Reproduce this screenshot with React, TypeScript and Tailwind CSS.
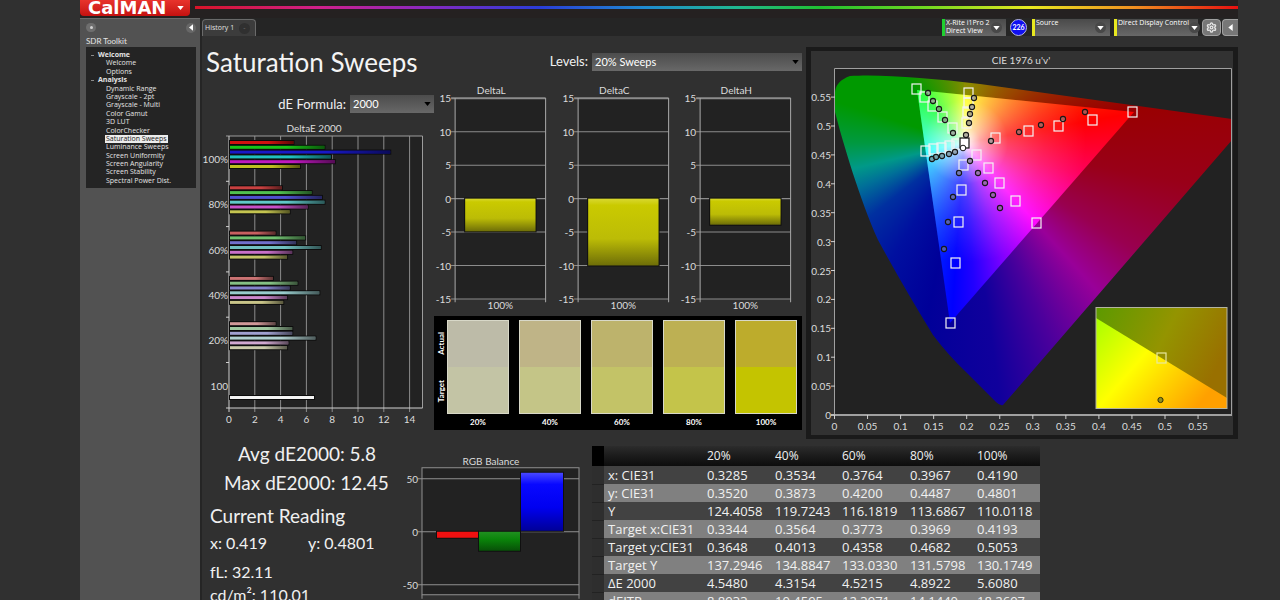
import { Settings } from "lucide-react";

type Point = [number, number];

const NAV = [
  { title: "Welcome", items: ["Welcome", "Options"] },
  {
    title: "Analysis",
    items: [
      "Dynamic Range",
      "Grayscale - 2pt",
      "Grayscale - Multi",
      "Color Gamut",
      "3D LUT",
      "ColorChecker",
      "Saturation Sweeps",
      "Luminance Sweeps",
      "Screen Uniformity",
      "Screen Angularity",
      "Screen Stability",
      "Spectral Power Dist.",
    ],
  },
];

const DELTA_E = [
  {
    label: "100%",
    values: [5.0, 7.4, 12.5, 7.9, 8.2, 5.5],
    colors: ["#d01010", "#18c418", "#1818c8", "#20c0c0", "#c018c0", "#c0c020"],
  },
  {
    label: "80%",
    values: [4.1, 6.4, 7.2, 7.4, 6.1, 4.7],
    colors: ["#c84040", "#50c050", "#5050d0", "#60c8c8", "#c850c8", "#c4c450"],
  },
  {
    label: "60%",
    values: [3.6, 5.9, 5.2, 7.1, 4.9, 4.5],
    colors: ["#c86060", "#70c070", "#7070cc", "#70c0c0", "#c870c8", "#c4c468"],
  },
  {
    label: "40%",
    values: [3.4, 5.3, 4.7, 7.0, 4.5, 4.2],
    colors: ["#cc7474", "#84c084", "#8484cc", "#98cccc", "#cc88cc", "#c8c488"],
  },
  {
    label: "20%",
    values: [3.6, 4.9, 4.9, 6.7, 4.6, 4.5],
    colors: ["#d09898", "#a0c8a0", "#a0a0d0", "#b0d0d0", "#d0a8d0", "#ccccac"],
  },
];

const SWATCHES = [
  { label: "20%", actual: "bg-[#bdbba8]", target: "bg-[#c3c4a5]" },
  { label: "40%", actual: "bg-[#bfb487]", target: "bg-[#c4c587]" },
  { label: "60%", actual: "bg-[#bdb36c]", target: "bg-[#c3c367]" },
  { label: "80%", actual: "bg-[#bdb053]", target: "bg-[#c4c44a]" },
  { label: "100%", actual: "bg-[#bdac2c]", target: "bg-[#c4c400]" },
];

const COLUMNS = ["20%", "40%", "60%", "80%", "100%"];

const ROWS = [
  ["x: CIE31", "0.3285", "0.3534", "0.3764", "0.3967", "0.4190"],
  ["y: CIE31", "0.3520", "0.3873", "0.4200", "0.4487", "0.4801"],
  ["Y", "124.4058", "119.7243", "116.1819", "113.6867", "110.0118"],
  ["Target x:CIE31", "0.3344", "0.3564", "0.3773", "0.3969", "0.4193"],
  ["Target y:CIE31", "0.3648", "0.4013", "0.4358", "0.4682", "0.5053"],
  ["Target Y", "137.2946", "134.8847", "133.0330", "131.5798", "130.1749"],
  ["ΔE 2000", "4.5480", "4.3154", "4.5215", "4.8922", "5.6080"],
  ["dEITP", "8.8933", "10.4595", "12.3971", "14.1440", "18.2697"],
];

const TARGETS: Point[] = [
  [916, 89], [924, 97], [932, 106], [942, 117], [952, 128],
  [968, 93], [968, 103], [967, 112], [966, 123],
  [995, 138], [1028, 131], [1058, 126], [1092, 120], [1132, 112],
  [925, 151], [933, 149], [941, 148], [949, 146], [956, 144],
  [976, 155], [988, 168], [999, 183], [1015, 201], [1036, 223],
  [963, 165], [961, 190], [958, 222], [955, 263], [950, 323],
];

const READINGS: Point[] = [
  [928, 93], [933, 101], [939, 109], [945, 120], [953, 133],
  [974, 98], [972, 107], [970, 114], [969, 123], [966, 135],
  [991, 141], [1019, 132], [1041, 125], [1063, 119], [1085, 112],
  [932, 159], [936, 157], [942, 156], [949, 154], [955, 152],
  [970, 161], [978, 173], [985, 183], [993, 195], [1000, 208],
  [959, 173], [953, 197], [948, 222], [944, 249],
];

function Caret({ className = "fill-white" }: { className?: string }) {
  return (
    <svg viewBox="0 0 8 5" className={`h-[4px] w-[7px] shrink-0 ${className}`}>
      <path d="M0 0h8L4 5z" />
    </svg>
  );
}

function Header() {
  return (
    <header className="flex h-[18px] bg-[#252121]">
      <button className="flex h-4 w-[110px] items-center justify-between rounded-b-sm bg-linear-to-b from-[#e8332c] to-[#c5100f] pr-[6px] pl-2 text-white">
        <span className="font-['DejaVu_Sans',sans-serif] text-[18px] leading-4 font-bold">
          CalMAN
        </span>
        <Caret />
      </button>
      <div className="mt-[6px] ml-[5px] h-[3px] flex-1 bg-[linear-gradient(90deg,#d81428,#d0208c_12%,#8a28c0_22%,#2a3cd8_33%,#1f8ad0_43%,#20b890_52%,#20c030_60%,#70d820_70%,#e8e820_80%,#f09020_90%,#e81010)]" />
    </header>
  );
}

function Sidebar() {
  return (
    <aside className="w-[120px] shrink-0 border-t border-[#6a6a6a] bg-[#525252] pr-1 pl-[6px]">
      <div className="flex h-[17px] items-center justify-between">
        <button
          aria-label="Options"
          className="flex h-[9px] w-[10px] items-center justify-center rounded-full bg-[#6e6e6e]"
        >
          <span className="h-[3px] w-[3px] rounded-full bg-[#d0d0d0]" />
        </button>
        <button
          aria-label="Collapse"
          className="flex h-[10px] w-[10px] items-center justify-center rounded-full bg-[#676767]"
        >
          <svg viewBox="0 0 5 8" className="h-[7px] w-[4px] fill-white">
            <path d="M5 0v8L0 4z" />
          </svg>
        </button>
      </div>
      <h2 className="h-[11px] text-[8px] leading-[11px] text-[#e4e4e4]">SDR Toolkit</h2>
      <nav className="flex h-[141px] flex-col justify-between bg-[#242424] pt-1 pb-[3px] font-['Open_Sans',sans-serif] text-[7px] leading-[8px] text-[#e4e4e4]">
        {NAV.map((group) => [
          <h3 key={group.title} className="flex items-center gap-1 pl-[5px] font-bold">
            <span className="h-px w-[3px] bg-[#8a8a8a]" />
            {group.title}
          </h3>,
          ...group.items.map((item) => (
            <a
              key={`${group.title}/${item}`}
              href="#"
              className={
                item === "Saturation Sweeps"
                  ? "ml-[19px] w-fit bg-[#ececec] px-px text-[#202020]"
                  : "ml-[19px] w-fit px-px"
              }
            >
              {item}
            </a>
          )),
        ])}
      </nav>
    </aside>
  );
}

function DeviceButton({
  stripe,
  width,
  lines,
}: {
  stripe: string;
  width: string;
  lines: string[];
}) {
  return (
    <button
      className={`flex h-[17px] ${width} items-center border-l-3 ${stripe} bg-linear-to-b from-[#4a4a4a] to-[#686868] pr-1 pl-px text-left font-['Open_Sans',sans-serif] text-[7px] leading-[8px] text-white`}
    >
      <span className="flex-1 self-start whitespace-nowrap">
        {lines.map((line) => (
          <span key={line} className="block">
            {line}
          </span>
        ))}
      </span>
      <span className="flex h-[11px] w-[11px] shrink-0 items-center justify-center rounded-full bg-[#484848]">
        <Caret />
      </span>
    </button>
  );
}

function Toolbar() {
  return (
    <div className="flex h-[18px] justify-between bg-[#252525]">
      <button className="mt-px flex w-[54px] items-center justify-between rounded-t-sm border border-b-0 border-[#6a6a6a] bg-[#3c3c3c] pr-[5px] pl-[2px] font-['Open_Sans',sans-serif] text-[7px] text-[#e0e0e0]">
        History 1
        <span className="h-[11px] w-[11px] rounded-full bg-[#303030] text-[7px] leading-[9px] text-[#707070]">
          -
        </span>
      </button>
      <div className="flex items-start gap-1 pt-px">
        <DeviceButton stripe="border-[#20d030]" width="w-16" lines={["X-Rite i1Pro 2", "Direct View"]} />
        <span className="mr-px flex h-[17px] w-[17px] items-center justify-center rounded-full border border-[#b8b8e0] bg-[#1010f0] text-[7px] font-bold text-white">
          226
        </span>
        <DeviceButton stripe="border-[#e8e820]" width="w-[78px]" lines={["Source"]} />
        <DeviceButton stripe="border-[#e8e820]" width="w-[84px]" lines={["Direct Display Control"]} />
        <div className="flex gap-px">
          <button
            aria-label="Settings"
            className="flex h-[17px] w-[19px] items-center justify-center rounded-sm border border-[#a0a0a0] bg-[#777777]"
          >
            <Settings className="h-[11px] w-[11px] text-[#e4e4e4]" strokeWidth={3} />
          </button>
          <button
            aria-label="Back"
            className="flex h-[17px] w-[16px] items-center justify-center rounded-l-sm border border-r-0 border-[#a0a0a0] bg-[#777777]"
          >
            <svg viewBox="0 0 5 8" className="h-[7px] w-[5px] fill-white">
              <path d="M5 0v8L0 4z" />
            </svg>
          </button>
        </div>
      </div>
    </div>
  );
}

function Dropdown({ id, value, width }: { id: string; value: string; width: string }) {
  return (
    <div className={`relative ${width}`}>
      <select
        id={id}
        className="block h-[18px] w-full appearance-none bg-linear-to-b from-[#4c4c4c] to-[#686868] pl-[3px] text-[11px] leading-[18px] text-white"
      >
        <option>{value}</option>
      </select>
      <span className="pointer-events-none absolute top-[7px] right-[3px]">
        <Caret className="block fill-black" />
      </span>
    </div>
  );
}

function DeltaEChart() {
  const x = (v: number) => 27 + v * 12.9;
  const band = 45.3;
  return (
    <svg viewBox="0 0 232 312" className="block w-full overflow-visible text-[10px]" fill="#dcdcdc">
      <defs>
        <linearGradient id="barFade" x1="0" x2="1">
          <stop offset="0.6" stopColor="#000" stopOpacity="0" />
          <stop offset="1" stopColor="#000" stopOpacity="0.55" />
        </linearGradient>
      </defs>
      <text x="112" y="14" textAnchor="middle">DeltaE 2000</text>
      <rect x="27" y="18" width="193.5" height="272" fill="#222222" />
      {[2, 4, 6, 8, 10, 12, 14].map((v) => (
        <path key={v} d={`M${x(v)} 18v276`} stroke="#8c8c8c" />
      ))}
      <path d="M24 18h196.5v272" fill="none" stroke="#9c9c9c" />
      <path d="M27 18v276M24 290h196.5" fill="none" stroke="#d0d0d0" />
      {[1, 2, 3, 4, 5].map((i) => (
        <path key={i} d={`M24 ${18 + i * band}h3`} stroke="#d0d0d0" />
      ))}
      {DELTA_E.map((group, g) => (
        <g key={group.label}>
          {group.values.map((v, i) => {
            const y = 18 + g * band + 5 + i * 4.8;
            return (
              <g key={i}>
                <rect x="27" y={y - 1} width={v * 12.9 + 1} height="5" fill="#0c0c0c" />
                <rect x="28" y={y} width={v * 12.9 - 1} height="3" fill={group.colors[i]} />
                <rect x="28" y={y} width={v * 12.9 - 1} height="3" fill="url(#barFade)" />
              </g>
            );
          })}
          <text x="26" y={18 + g * band + 27} textAnchor="end">{group.label}</text>
        </g>
      ))}
      <rect x="27" y="277" width="86" height="5" fill="#0c0c0c" />
      <rect x="28" y="278" width="84" height="3" fill="#f4f4f4" />
      <text x="26" y="272" textAnchor="end">100</text>
      {[0, 2, 4, 6, 8, 10, 12, 14].map((v) => (
        <text key={v} x={x(v)} y="305" textAnchor="middle">{v}</text>
      ))}
    </svg>
  );
}

function DeltaChart({ title, value }: { title: string; value: number }) {
  const y = (v: number) => 114 - v * 6.65;
  return (
    <svg viewBox="0 0 122 228" className="block min-w-0 flex-1 text-[10px]" fill="#dcdcdc">
      <defs>
        <linearGradient id="yellowBar" x1="0" x2="0" y1="0" y2="1">
          <stop offset="0" stopColor="#d8d830" />
          <stop offset="0.1" stopColor="#caca00" />
          <stop offset="0.6" stopColor="#bcbc06" />
          <stop offset="1" stopColor="#6e6e08" />
        </linearGradient>
      </defs>
      <text x="57" y="10" textAnchor="middle">{title}</text>
      <rect x="21" y="14" width="90" height="200" fill="#222222" />
      {[15, 10, 5, 0, -5, -10, -15].map((v) => (
        <g key={v}>
          <path d={`M17 ${y(v)}h94`} stroke="#8c8c8c" strokeWidth={v === 15 ? 2 : 1} />
          <text x="17" y={y(v) + 4} textAnchor="end">{v}</text>
        </g>
      ))}
      <path d="M21 14v203M111 14v203" stroke="#a8a8a8" />
      <rect x="30" y={y(0) - 1} width="72" height={-value * 6.65 + 2} fill="#101010" />
      <rect x="31" y={y(0)} width="70" height={-value * 6.65} fill="url(#yellowBar)" />
      <text x="66" y="224" textAnchor="middle">100%</text>
    </svg>
  );
}

function Swatches() {
  return (
    <div className="mr-1 flex h-[114px] bg-black pt-1 font-bold text-white">
      <div className="flex h-[94px] w-[13px] flex-col-reverse items-center justify-around text-[8px] leading-[10px]">
        <span className="rotate-180 [writing-mode:vertical-rl]">Target</span>
        <span className="rotate-180 [writing-mode:vertical-rl]">Actual</span>
      </div>
      <div className="flex flex-1 gap-[10px] pr-[5px]">
        {SWATCHES.map((swatch) => (
          <div key={swatch.label} className="flex-1 text-center">
            <div className="flex h-[94px] flex-col border border-[#d8d8c8]">
              <div className={`flex-1 ${swatch.actual}`} />
              <div className={`flex-1 ${swatch.target}`} />
            </div>
            <p className="text-[8px] leading-4">{swatch.label}</p>
          </div>
        ))}
      </div>
    </div>
  );
}

// Coordinates share one screen-space origin so the locus, the gamut triangle
// and the measured points line up.
function CieChart() {
  const ux = (v: number) => 834.5 + v * 661;
  const vy = (v: number) => 415 - v * 578;
  const locus =
    "M1003 405Q1000 406 996 402L967 373Q948 355 933 335C914 304 896 273 878 240C860 200 843 143 835 112V92Q836 81 850 76C880 74 930 78 980 84L1232 119V140Z";
  return (
    <svg viewBox="806 47 432 392" className="block w-full bg-[#1a1a1a] text-[10px]" fill="#dcdcdc">
      <defs>
        <clipPath id="locus">
          <path d={locus} />
        </clipPath>
        <clipPath id="gamut">
          <path d="M917 90L1134 112L950 323Z" />
        </clipPath>
        <radialGradient id="white" gradientUnits="userSpaceOnUse" cx="966" cy="142" r="120">
          <stop offset="0" stopColor="#fff" />
          <stop offset="0.12" stopColor="#fff" stopOpacity="0.65" />
          <stop offset="0.35" stopColor="#fff" stopOpacity="0.26" />
          <stop offset="0.65" stopColor="#fff" stopOpacity="0.12" />
          <stop offset="1" stopColor="#fff" stopOpacity="0" />
        </radialGradient>
        <linearGradient id="insetDim" x1="0" x2="1" y1="0" y2="0.4">
          <stop offset="0" stopColor="#5c9a00" />
          <stop offset="0.55" stopColor="#949400" />
          <stop offset="1" stopColor="#997000" />
        </linearGradient>
        <linearGradient id="insetLit" x1="0" x2="1" y1="0" y2="0.6">
          <stop offset="0" stopColor="#a8ff00" />
          <stop offset="0.45" stopColor="#ffff00" />
          <stop offset="1" stopColor="#ffa000" />
        </linearGradient>
      </defs>
      <rect x="811" y="51" width="422" height="384" fill="#323232" />
      <text x="1021" y="64" textAnchor="middle">CIE 1976 u'v'</text>
      <rect x="834" y="68" width="398" height="347" fill="#222222" />
      <g clipPath="url(#locus)">
        <foreignObject x="834" y="68" width="398" height="347">
          <div className="h-full w-full bg-[conic-gradient(at_130px_75px,#8c8c00_4deg,#994400_45deg,#990000_78deg,#990018_100deg,#990050_122deg,#990099_138deg,#4c009c_156deg,#10009c_172deg,#000099_192deg,#0010a0_212deg,#0030a0_232deg,#007098_247deg,#009988_257deg,#009940_270deg,#009900_288deg,#009900_318deg,#509000_345deg,#8c8c00_364deg)]" />
        </foreignObject>
      </g>
      <g clipPath="url(#gamut)">
        <foreignObject x="834" y="68" width="398" height="347">
          <div className="h-full w-full bg-[conic-gradient(at_130px_75px,#ffff00_4deg,#ff8800_40deg,#ff2000_70deg,#ff0000_80deg,#ff0060_105deg,#ff00ff_138deg,#8800ff_160deg,#2200ff_176deg,#0000ff_184deg,#0070ff_215deg,#00ffff_258deg,#00ff90_290deg,#00ff20_318deg,#90ff00_345deg,#ffff00_364deg)]" />
        </foreignObject>
        <rect x="834" y="68" width="398" height="347" fill="url(#white)" />
      </g>
      <path d="M834.5 418V68.5H1231.5V415" fill="none" stroke="#a0a0a0" />
      <path d="M831 415h401" stroke="#a0a0a0" strokeWidth="2" />
      {[0, 0.05, 0.1, 0.15, 0.2, 0.25, 0.3, 0.35, 0.4, 0.45, 0.5, 0.55].map((v) => (
        <g key={v}>
          <path d={`M${ux(v)} 415v4M831 ${vy(v)}h4`} stroke="#d0d0d0" />
          <text x={ux(v)} y="430" textAnchor="middle">{v}</text>
          <text x="831" y={vy(v) + 4} textAnchor="end">{v}</text>
        </g>
      ))}
      {TARGETS.map(([x, y]) => (
        <rect key={`${x}-${y}`} x={x - 4} y={y - 5} width="9" height="10" fill="none" stroke="#f4f4f4" strokeWidth="1.2" />
      ))}
      <rect x="960" y="138" width="9" height="10" fill="#fff" stroke="#111" strokeWidth="1.2" />
      {READINGS.map(([x, y]) => (
        <circle key={`${x}-${y}`} cx={x} cy={y} r="2.6" fill="#808080" fillOpacity="0.6" stroke="#181818" strokeWidth="1.1" />
      ))}
      <circle cx="963" cy="148" r="2.8" fill="#fff" stroke="#181818" />
      <rect x="1096" y="307.5" width="131" height="101" fill="url(#insetDim)" />
      <path d="M1096 318L1227 398V408.500H1096Z" fill="url(#insetLit)" />
      <rect x="1096" y="307.5" width="131" height="101" fill="none" stroke="#b4b4a0" />
      <rect x="1157" y="353" width="9" height="10" fill="none" stroke="#e8e8a0" strokeWidth="1.2" />
      <circle cx="1160.500" cy="400" r="2.6" fill="#909020" stroke="#303008" />
    </svg>
  );
}

function Summary() {
  return (
    <section className="w-[200px] shrink-0 pl-2 text-[16px] whitespace-nowrap text-[#f0f0f0]">
      <p className="pl-7 text-[19px] leading-[29px]">Avg dE2000: 5.8</p>
      <p className="pl-[14px] text-[19px] leading-[29px]">Max dE2000: 12.45</p>
      <h2 className="pt-1 text-[19px] leading-[30px]">Current Reading</h2>
      <div className="flex pt-px leading-[22px]">
        <p className="w-[98px]">x: 0.419</p>
        <p>y: 0.4801</p>
      </div>
      <p className="pt-[5px] leading-[25px]">fL: 32.11</p>
      <p className="leading-[22px]">cd/m²: 110.01</p>
    </section>
  );
}

function RgbBalance() {
  return (
    <svg viewBox="0 0 184 160" className="block w-[184px] shrink-0 text-[10px]" fill="#dcdcdc">
      <defs>
        <linearGradient id="blueBar" x1="0" x2="0" y1="0" y2="1">
          <stop offset="0" stopColor="#4848ff" />
          <stop offset="0.2" stopColor="#0808ff" />
          <stop offset="0.6" stopColor="#0000f0" />
          <stop offset="1" stopColor="#000098" />
        </linearGradient>
        <linearGradient id="greenBar" x1="0" x2="0" y1="0" y2="1">
          <stop offset="0" stopColor="#209020" />
          <stop offset="0.4" stopColor="#0a840a" />
          <stop offset="1" stopColor="#085008" />
        </linearGradient>
      </defs>
      <text x="89" y="20" textAnchor="middle">RGB Balance</text>
      <rect x="20" y="23" width="157" height="127" fill="#222222" stroke="#909090" />
      {[50, 0, -50].map((v) => (
        <g key={v}>
          <path d={`M16 ${87 - v * 1.06}h161`} stroke="#909090" />
          <text x="16" y={91 - v * 1.06} textAnchor="end">{v}</text>
        </g>
      ))}
      <path d="M20 150v4M177 150v4" stroke="#909090" />
      <rect x="34" y="86" width="43" height="8" fill="#101010" />
      <rect x="35" y="87" width="41" height="6" fill="#f01010" />
      <rect x="76" y="86" width="43" height="21" fill="#101010" />
      <rect x="77" y="87" width="41" height="19" fill="url(#greenBar)" />
      <rect x="118" y="27" width="44" height="60" fill="#101010" />
      <rect x="119" y="28" width="42" height="58" fill="url(#blueBar)" />
      <text x="97" y="162" textAnchor="middle">100%</text>
    </svg>
  );
}

function ResultsTable() {
  return (
    <table className="mt-[7px] ml-[6px] h-fit w-[448px] shrink-0 table-fixed border-collapse text-left font-['Open_Sans',sans-serif] text-[13px] whitespace-nowrap text-[#f0f0f0]">
      <colgroup>
        <col className="w-3" />
        <col className="w-[103px]" />
        <col className="w-[68px]" />
        <col className="w-[67px]" />
        <col className="w-[68px]" />
        <col className="w-[67px]" />
        <col />
      </colgroup>
      <thead>
        <tr className="h-5 bg-linear-to-b from-[#2c2c2c] to-[#0c0c0c] leading-[18px]">
          <td className="bg-black p-0" />
          <td className="p-0" />
          {COLUMNS.map((column) => (
            <th key={column} scope="col" className="p-0 text-[12px] font-normal">{column}</th>
          ))}
        </tr>
      </thead>
      <tbody>
        {ROWS.map(([name, ...values], i) => (
          <tr key={name} className={i % 2 ? "h-[18px] bg-[#808080] leading-[18px]" : "h-[18px] bg-[#424242] leading-[18px]"}>
            <td className="border-b border-[#222222] bg-[#2e2e2e] p-0" />
            <th scope="row" className="p-0 pl-1 font-normal">{name}</th>
            {values.map((value, c) => (
              <td key={c} className="p-0">{value}</td>
            ))}
          </tr>
        ))}
      </tbody>
    </table>
  );
}

export default function App() {
  return (
    <div className="h-screen overflow-hidden bg-[#303030] pr-[42px] pl-20 font-['Lato','Open_Sans',sans-serif]">
      <Header />
      <div className="flex h-full">
        <Sidebar />
        <main className="min-w-0 flex-1 border-l-2 border-[#252525] bg-[#303030]">
          <Toolbar />
          <div className="flex pt-[11px]">
            <div className="min-w-0 flex-[604]">
              <div className="flex justify-between pr-1 pl-1">
                <h1 className="text-[26px] leading-[30px] whitespace-nowrap text-[#f4f4f4]">
                  Saturation Sweeps
                </h1>
                <div className="flex items-center gap-1">
                  <label htmlFor="levels" className="text-[13px] text-[#f0f0f0]">
                    Levels:
                  </label>
                  <Dropdown id="levels" value="20% Sweeps" width="w-[210px]" />
                </div>
              </div>
              <div className="flex pt-1">
                <div className="min-w-0 flex-[232]">
                  <div className="flex items-center justify-end gap-1 pt-[14px] pb-[5px]">
                    <label htmlFor="formula" className="text-[13px] leading-[18px] text-[#f0f0f0]">
                      dE Formula:
                    </label>
                    <Dropdown id="formula" value="2000" width="w-[84px]" />
                  </div>
                  <DeltaEChart />
                </div>
                <div className="min-w-0 flex-[372]">
                  <div className="flex pt-[3px] pr-1 pb-[3px]">
                    <DeltaChart title="DeltaL" value={-4.9} />
                    <DeltaChart title="DeltaC" value={-10} />
                    <DeltaChart title="DeltaH" value={-3.9} />
                  </div>
                  <Swatches />
                </div>
              </div>
            </div>
            <div className="min-w-0 flex-[432]">
              <CieChart />
            </div>
          </div>
          <div className="flex">
            <Summary />
            <RgbBalance />
            <ResultsTable />
          </div>
        </main>
      </div>
    </div>
  );
}
